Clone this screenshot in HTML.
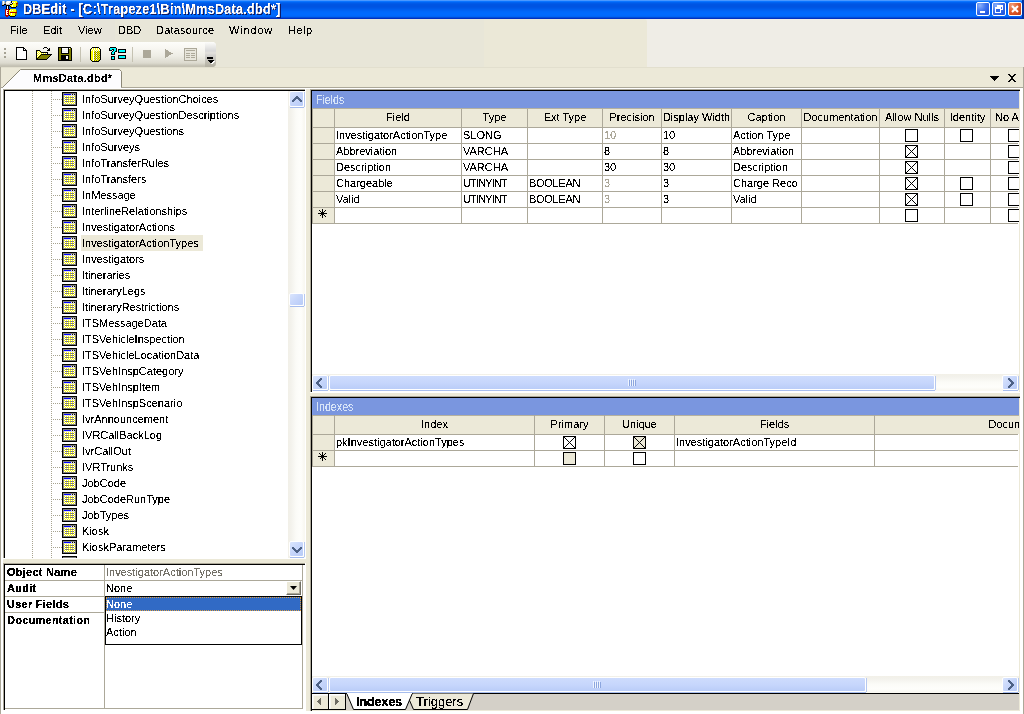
<!DOCTYPE html><html><head><meta charset="utf-8"><style>
*{box-sizing:border-box;margin:0;padding:0}
html,body{width:1024px;height:714px;overflow:hidden;background:#ECE9D8;font-family:"Liberation Sans",sans-serif;font-size:11px;color:#000;position:relative}
div,span{position:absolute}
.nw{white-space:nowrap}
.nw,.hc{filter:url(#aa)}
.bd{filter:url(#ab)!important}
</style></head><body>
<svg width="0" height="0" style="position:absolute"><filter id="aa" x="0" y="0" width="100%" height="100%"><feComponentTransfer><feFuncA type="discrete" tableValues="0 0 0 0 0 0 0 0 0 1 1 1 1 1 1 1 1 1 1 1"/></feComponentTransfer></filter><filter id="ab" x="0" y="0" width="100%" height="100%"><feComponentTransfer><feFuncA type="discrete" tableValues="0 0 0 1 1 1 1 1 1 1"/></feComponentTransfer></filter></svg>
<div style="left:0px;top:0px;width:1024px;height:19px;background:linear-gradient(#4A98FF 0px 1px,#0A74FF 1px 2px,#0062F2 2px 3px,#005AE8 3px 4px,#0055E3 4px 5px,#0054E2 5px 6px,#0054E2 6px 7px,#0056E5 7px 8px,#005AE9 8px 9px,#005FEF 9px 10px,#0063F4 10px 11px,#0067F9 11px 12px,#0069FC 12px 13px,#006AFE 13px 14px,#006AFE 14px 15px,#0069FC 15px 16px,#0064F6 16px 17px,#004ED8 17px 18px,#0030C0 18px 19px)"></div>
<div style="left:1022px;top:0px;width:2px;height:19px;background:#0030A0"></div>
<span class="nw" style="left:23px;top:1px;color:#fff;font-weight:bold;font-size:14px;line-height:17px;letter-spacing:0.3px;text-shadow:1px 1px 0 #0A1E6A;transform:scaleX(0.9);transform-origin:0 0">DBEdit - [C:\Trapeze1\Bin\MmsData.dbd*]</span>
<svg style="position:absolute;left:2px;top:1px" width="16" height="16" shape-rendering="crispEdges"><rect x="0" y="0" width="1" height="1" fill="#C8C4BC"/><rect x="1" y="0" width="1" height="1" fill="#fff"/><rect x="2" y="0" width="1" height="1" fill="#C8C4BC"/><rect x="4" y="0" width="1" height="1" fill="#C8C4BC"/><rect x="5" y="0" width="4" height="1" fill="#fff"/><rect x="9" y="0" width="1" height="1" fill="#000"/><rect x="10" y="0" width="5" height="1" fill="#FFFF00"/><rect x="0" y="1" width="1" height="1" fill="#C8C4BC"/><rect x="1" y="1" width="1" height="1" fill="#fff"/><rect x="2" y="1" width="1" height="1" fill="#C8C4BC"/><rect x="3" y="1" width="1" height="1" fill="#8A8680"/><rect x="4" y="1" width="4" height="1" fill="#fff"/><rect x="8" y="1" width="1" height="1" fill="#C8C4BC"/><rect x="9" y="1" width="1" height="1" fill="#000"/><rect x="10" y="1" width="1" height="1" fill="#fff"/><rect x="11" y="1" width="1" height="1" fill="#FFFF00"/><rect x="12" y="1" width="1" height="1" fill="#fff"/><rect x="13" y="1" width="2" height="1" fill="#FFFF00"/><rect x="15" y="1" width="1" height="1" fill="#808000"/><rect x="0" y="2" width="1" height="1" fill="#C8C4BC"/><rect x="1" y="2" width="1" height="1" fill="#fff"/><rect x="2" y="2" width="1" height="1" fill="#C8C4BC"/><rect x="3" y="2" width="1" height="1" fill="#8A8680"/><rect x="4" y="2" width="3" height="1" fill="#fff"/><rect x="7" y="2" width="2" height="1" fill="#C8C4BC"/><rect x="9" y="2" width="1" height="1" fill="#fff"/><rect x="10" y="2" width="1" height="1" fill="#000"/><rect x="11" y="2" width="3" height="1" fill="#FFFF00"/><rect x="14" y="2" width="2" height="1" fill="#B00000"/><rect x="0" y="3" width="2" height="1" fill="#C8C4BC"/><rect x="2" y="3" width="2" height="1" fill="#000"/><rect x="4" y="3" width="4" height="1" fill="#C8C4BC"/><rect x="8" y="3" width="2" height="1" fill="#000"/><rect x="10" y="3" width="4" height="1" fill="#FFFF00"/><rect x="14" y="3" width="2" height="1" fill="#808000"/><rect x="0" y="4" width="2" height="1" fill="#000"/><rect x="4" y="4" width="4" height="1" fill="#000"/><rect x="8" y="4" width="2" height="1" fill="#FFFF00"/><rect x="10" y="4" width="1" height="1" fill="#fff"/><rect x="11" y="4" width="3" height="1" fill="#FFFF00"/><rect x="14" y="4" width="2" height="1" fill="#808000"/><rect x="4" y="5" width="1" height="1" fill="#000"/><rect x="5" y="5" width="1" height="1" fill="#fff"/><rect x="6" y="5" width="1" height="1" fill="#000"/><rect x="8" y="5" width="1" height="1" fill="#000"/><rect x="9" y="5" width="1" height="1" fill="#FFFF00"/><rect x="10" y="5" width="1" height="1" fill="#fff"/><rect x="11" y="5" width="3" height="1" fill="#FFFF00"/><rect x="14" y="5" width="1" height="1" fill="#000"/><rect x="4" y="6" width="1" height="1" fill="#000"/><rect x="5" y="6" width="1" height="1" fill="#fff"/><rect x="6" y="6" width="1" height="1" fill="#000"/><rect x="9" y="6" width="5" height="1" fill="#000"/><rect x="4" y="7" width="1" height="1" fill="#000"/><rect x="5" y="7" width="1" height="1" fill="#fff"/><rect x="6" y="7" width="1" height="1" fill="#000"/><rect x="3" y="8" width="4" height="1" fill="#B00000"/><rect x="7" y="8" width="1" height="1" fill="#000"/><rect x="8" y="8" width="6" height="1" fill="#FFFF00"/><rect x="3" y="9" width="1" height="1" fill="#B00000"/><rect x="4" y="9" width="2" height="1" fill="#fff"/><rect x="6" y="9" width="1" height="1" fill="#B00000"/><rect x="7" y="9" width="1" height="1" fill="#FFFF00"/><rect x="8" y="9" width="1" height="1" fill="#fff"/><rect x="9" y="9" width="1" height="1" fill="#FFFF00"/><rect x="10" y="9" width="1" height="1" fill="#fff"/><rect x="11" y="9" width="3" height="1" fill="#FFFF00"/><rect x="14" y="9" width="1" height="1" fill="#808000"/><rect x="3" y="10" width="1" height="1" fill="#B00000"/><rect x="4" y="10" width="1" height="1" fill="#fff"/><rect x="5" y="10" width="2" height="1" fill="#B00000"/><rect x="7" y="10" width="7" height="1" fill="#FFFF00"/><rect x="14" y="10" width="1" height="1" fill="#808000"/><rect x="3" y="11" width="1" height="1" fill="#B00000"/><rect x="4" y="11" width="2" height="1" fill="#fff"/><rect x="6" y="11" width="1" height="1" fill="#B00000"/><rect x="7" y="11" width="1" height="1" fill="#FFFF00"/><rect x="8" y="11" width="7" height="1" fill="#B00000"/><rect x="3" y="12" width="1" height="1" fill="#B00000"/><rect x="4" y="12" width="1" height="1" fill="#fff"/><rect x="5" y="12" width="2" height="1" fill="#B00000"/><rect x="7" y="12" width="2" height="1" fill="#FFFF00"/><rect x="9" y="12" width="1" height="1" fill="#fff"/><rect x="10" y="12" width="3" height="1" fill="#FFFF00"/><rect x="13" y="12" width="2" height="1" fill="#808000"/><rect x="3" y="13" width="1" height="1" fill="#B00000"/><rect x="4" y="13" width="2" height="1" fill="#fff"/><rect x="6" y="13" width="1" height="1" fill="#B00000"/><rect x="7" y="13" width="2" height="1" fill="#FFFF00"/><rect x="9" y="13" width="1" height="1" fill="#fff"/><rect x="10" y="13" width="3" height="1" fill="#FFFF00"/><rect x="13" y="13" width="2" height="1" fill="#808000"/><rect x="3" y="14" width="4" height="1" fill="#B00000"/><rect x="7" y="14" width="1" height="1" fill="#000"/><rect x="8" y="14" width="5" height="1" fill="#FFFF00"/><rect x="13" y="14" width="1" height="1" fill="#000"/><rect x="4" y="15" width="2" height="1" fill="#B00000"/><rect x="8" y="15" width="5" height="1" fill="#000"/></svg>
<div style="left:976px;top:2px;width:14px;height:14px;border:1px solid #fff;border-radius:2px;background:radial-gradient(circle at 25% 20%,#8BB0FA 0,#3D72EE 45%,#2359E0 80%);overflow:hidden"><div style="left:3px;top:8px;width:5px;height:2px;background:#fff"></div></div>
<div style="left:992px;top:2px;width:14px;height:14px;border:1px solid #fff;border-radius:2px;background:radial-gradient(circle at 25% 20%,#8BB0FA 0,#3D72EE 45%,#2359E0 80%);overflow:hidden"><div style="left:4px;top:2px;width:6px;height:5px;border:1px solid #fff;border-top-width:2px"></div><div style="left:2px;top:4px;width:6px;height:6px;border:1px solid #fff;border-top-width:2px;background:#2C64E6"></div></div>
<div style="left:1008px;top:2px;width:14px;height:14px;border:1px solid #fff;border-radius:2px;background:radial-gradient(circle at 25% 20%,#F0A080 0,#E0602F 45%,#C8421A 85%);overflow:hidden"><svg width="12" height="12" style="position:absolute;left:0;top:0"><path d="M3 3L9 9M9 3L3 9" stroke="#fff" stroke-width="2"/></svg></div>
<div style="left:0px;top:19px;width:1024px;height:48px;background:#EFEDE6"></div>
<div style="left:0px;top:19px;width:484px;height:48px;background:#E8E6D8"></div>
<div style="left:484px;top:19px;width:163px;height:48px;background:#EBE8D7;border-top-right-radius:3px"></div>
<div style="left:0px;top:19px;width:115px;height:23px;background:#E6E4D9"></div>
<span class="nw" style="left:10px;top:24px;line-height:13px;letter-spacing:0px">File</span>
<span class="nw" style="left:43px;top:24px;line-height:13px;letter-spacing:0px">Edit</span>
<span class="nw" style="left:78px;top:24px;line-height:13px;letter-spacing:0px">View</span>
<span class="nw" style="left:118px;top:24px;line-height:13px;letter-spacing:0px">DBD</span>
<span class="nw" style="left:156px;top:24px;line-height:13px;letter-spacing:0.2px">Datasource</span>
<span class="nw" style="left:229px;top:24px;line-height:13px;letter-spacing:0.8px">Window</span>
<span class="nw" style="left:288px;top:24px;line-height:13px;letter-spacing:0.5px">Help</span>
<div style="left:0px;top:42px;width:216px;height:25px;background:linear-gradient(#FDFDFA 0px,#F8F7F2 6px,#EEEDE5 14px,#DCDACF 21px,#C3C0B2 24px);border-top-right-radius:4px;border-bottom-right-radius:4px"></div>
<div style="left:205px;top:42px;width:11px;height:25px;background:linear-gradient(#FDFDFB 0px,#F0F0EE 3px,#D8D8D8 9px,#E4E2DC 11px,#D4D3D0 13px,#C8C6BE 17px,#B5B2A4 24px);border-top-right-radius:4px;border-bottom-right-radius:4px"></div>
<div style="left:207px;top:57px;width:6px;height:2px;background:#000"></div>
<svg style="position:absolute;left:206px;top:60px" width="9" height="5" shape-rendering="crispEdges"><path d="M2 1H9L5.5 4.5Z" fill="#fff"/><path d="M1 0H8L4.5 3.5Z" fill="#000"/></svg>
<div style="left:4px;top:48px;width:2px;height:2px;background:#A5A294"></div>
<div style="left:4px;top:52px;width:2px;height:2px;background:#A5A294"></div>
<div style="left:4px;top:56px;width:2px;height:2px;background:#A5A294"></div>
<div style="left:80px;top:47px;width:1px;height:15px;background:#C5C2B2"></div>
<div style="left:132px;top:47px;width:1px;height:15px;background:#C5C2B2"></div>
<svg style="position:absolute;left:16px;top:47px" width="12" height="13" shape-rendering="crispEdges"><rect x="0" y="0" width="8" height="1" fill="#000"/><rect x="0" y="1" width="1" height="1" fill="#000"/><rect x="1" y="1" width="6" height="1" fill="#fff"/><rect x="7" y="1" width="2" height="1" fill="#000"/><rect x="0" y="2" width="1" height="1" fill="#000"/><rect x="1" y="2" width="6" height="1" fill="#fff"/><rect x="7" y="2" width="1" height="1" fill="#000"/><rect x="8" y="2" width="1" height="1" fill="#fff"/><rect x="9" y="2" width="1" height="1" fill="#000"/><rect x="0" y="3" width="1" height="1" fill="#000"/><rect x="1" y="3" width="6" height="1" fill="#fff"/><rect x="7" y="3" width="4" height="1" fill="#000"/><rect x="0" y="4" width="1" height="1" fill="#000"/><rect x="1" y="4" width="9" height="1" fill="#fff"/><rect x="10" y="4" width="1" height="1" fill="#000"/><rect x="0" y="5" width="1" height="1" fill="#000"/><rect x="1" y="5" width="9" height="1" fill="#fff"/><rect x="10" y="5" width="1" height="1" fill="#000"/><rect x="0" y="6" width="1" height="1" fill="#000"/><rect x="1" y="6" width="9" height="1" fill="#fff"/><rect x="10" y="6" width="1" height="1" fill="#000"/><rect x="0" y="7" width="1" height="1" fill="#000"/><rect x="1" y="7" width="9" height="1" fill="#fff"/><rect x="10" y="7" width="1" height="1" fill="#000"/><rect x="0" y="8" width="1" height="1" fill="#000"/><rect x="1" y="8" width="9" height="1" fill="#fff"/><rect x="10" y="8" width="1" height="1" fill="#000"/><rect x="0" y="9" width="1" height="1" fill="#000"/><rect x="1" y="9" width="9" height="1" fill="#fff"/><rect x="10" y="9" width="1" height="1" fill="#000"/><rect x="0" y="10" width="1" height="1" fill="#000"/><rect x="1" y="10" width="9" height="1" fill="#fff"/><rect x="10" y="10" width="1" height="1" fill="#000"/><rect x="0" y="11" width="1" height="1" fill="#000"/><rect x="1" y="11" width="9" height="1" fill="#fff"/><rect x="10" y="11" width="1" height="1" fill="#000"/><rect x="0" y="12" width="11" height="1" fill="#000"/></svg><svg style="position:absolute;left:36px;top:47px" width="16" height="13" shape-rendering="crispEdges"><rect x="8" y="0" width="3" height="1" fill="#000"/><rect x="7" y="1" width="1" height="1" fill="#000"/><rect x="11" y="1" width="1" height="1" fill="#000"/><rect x="13" y="1" width="1" height="1" fill="#000"/><rect x="12" y="2" width="2" height="1" fill="#000"/><rect x="0" y="3" width="4" height="1" fill="#000"/><rect x="11" y="3" width="3" height="1" fill="#000"/><rect x="0" y="4" width="1" height="1" fill="#000"/><rect x="1" y="4" width="1" height="1" fill="#FFFF00"/><rect x="2" y="4" width="1" height="1" fill="#fff"/><rect x="3" y="4" width="1" height="1" fill="#FFFF00"/><rect x="4" y="4" width="1" height="1" fill="#000"/><rect x="0" y="5" width="1" height="1" fill="#000"/><rect x="1" y="5" width="1" height="1" fill="#fff"/><rect x="2" y="5" width="1" height="1" fill="#FFFF00"/><rect x="3" y="5" width="1" height="1" fill="#fff"/><rect x="4" y="5" width="1" height="1" fill="#FFFF00"/><rect x="5" y="5" width="7" height="1" fill="#000"/><rect x="0" y="6" width="1" height="1" fill="#000"/><rect x="1" y="6" width="1" height="1" fill="#FFFF00"/><rect x="2" y="6" width="1" height="1" fill="#fff"/><rect x="3" y="6" width="1" height="1" fill="#FFFF00"/><rect x="4" y="6" width="1" height="1" fill="#fff"/><rect x="5" y="6" width="1" height="1" fill="#FFFF00"/><rect x="6" y="6" width="1" height="1" fill="#fff"/><rect x="7" y="6" width="1" height="1" fill="#FFFF00"/><rect x="8" y="6" width="1" height="1" fill="#fff"/><rect x="9" y="6" width="1" height="1" fill="#FFFF00"/><rect x="10" y="6" width="1" height="1" fill="#fff"/><rect x="11" y="6" width="1" height="1" fill="#000"/><rect x="0" y="7" width="1" height="1" fill="#000"/><rect x="1" y="7" width="1" height="1" fill="#fff"/><rect x="2" y="7" width="1" height="1" fill="#FFFF00"/><rect x="3" y="7" width="1" height="1" fill="#fff"/><rect x="4" y="7" width="1" height="1" fill="#FFFF00"/><rect x="5" y="7" width="11" height="1" fill="#000"/><rect x="0" y="8" width="1" height="1" fill="#000"/><rect x="1" y="8" width="1" height="1" fill="#FFFF00"/><rect x="2" y="8" width="1" height="1" fill="#fff"/><rect x="3" y="8" width="1" height="1" fill="#FFFF00"/><rect x="4" y="8" width="1" height="1" fill="#000"/><rect x="5" y="8" width="9" height="1" fill="#808000"/><rect x="14" y="8" width="1" height="1" fill="#000"/><rect x="0" y="9" width="1" height="1" fill="#000"/><rect x="1" y="9" width="1" height="1" fill="#fff"/><rect x="2" y="9" width="1" height="1" fill="#FFFF00"/><rect x="3" y="9" width="1" height="1" fill="#000"/><rect x="4" y="9" width="9" height="1" fill="#808000"/><rect x="13" y="9" width="1" height="1" fill="#000"/><rect x="0" y="10" width="1" height="1" fill="#000"/><rect x="1" y="10" width="1" height="1" fill="#FFFF00"/><rect x="2" y="10" width="1" height="1" fill="#000"/><rect x="3" y="10" width="9" height="1" fill="#808000"/><rect x="12" y="10" width="1" height="1" fill="#000"/><rect x="0" y="11" width="2" height="1" fill="#000"/><rect x="2" y="11" width="9" height="1" fill="#808000"/><rect x="11" y="11" width="1" height="1" fill="#000"/><rect x="0" y="12" width="11" height="1" fill="#000"/></svg><svg style="position:absolute;left:58px;top:47px" width="14" height="14" shape-rendering="crispEdges"><rect x="0" y="0" width="13" height="1" fill="#000"/><rect x="0" y="1" width="1" height="1" fill="#000"/><rect x="1" y="1" width="2" height="1" fill="#808000"/><rect x="3" y="1" width="1" height="1" fill="#000"/><rect x="4" y="1" width="6" height="1" fill="#fff"/><rect x="10" y="1" width="1" height="1" fill="#000"/><rect x="11" y="1" width="1" height="1" fill="#fff"/><rect x="12" y="1" width="1" height="1" fill="#808000"/><rect x="13" y="1" width="1" height="1" fill="#000"/><rect x="0" y="2" width="1" height="1" fill="#000"/><rect x="1" y="2" width="2" height="1" fill="#808000"/><rect x="3" y="2" width="1" height="1" fill="#000"/><rect x="4" y="2" width="6" height="1" fill="#F0F0F0"/><rect x="10" y="2" width="1" height="1" fill="#000"/><rect x="11" y="2" width="2" height="1" fill="#808000"/><rect x="13" y="2" width="1" height="1" fill="#000"/><rect x="0" y="3" width="1" height="1" fill="#000"/><rect x="1" y="3" width="2" height="1" fill="#808000"/><rect x="3" y="3" width="1" height="1" fill="#000"/><rect x="4" y="3" width="6" height="1" fill="#fff"/><rect x="10" y="3" width="1" height="1" fill="#000"/><rect x="11" y="3" width="2" height="1" fill="#808000"/><rect x="13" y="3" width="1" height="1" fill="#000"/><rect x="0" y="4" width="1" height="1" fill="#000"/><rect x="1" y="4" width="2" height="1" fill="#808000"/><rect x="3" y="4" width="1" height="1" fill="#000"/><rect x="4" y="4" width="6" height="1" fill="#F0F0F0"/><rect x="10" y="4" width="1" height="1" fill="#000"/><rect x="11" y="4" width="2" height="1" fill="#808000"/><rect x="13" y="4" width="1" height="1" fill="#000"/><rect x="0" y="5" width="1" height="1" fill="#000"/><rect x="1" y="5" width="2" height="1" fill="#808000"/><rect x="3" y="5" width="1" height="1" fill="#000"/><rect x="4" y="5" width="6" height="1" fill="#fff"/><rect x="10" y="5" width="1" height="1" fill="#000"/><rect x="11" y="5" width="2" height="1" fill="#808000"/><rect x="13" y="5" width="1" height="1" fill="#000"/><rect x="0" y="6" width="1" height="1" fill="#000"/><rect x="1" y="6" width="2" height="1" fill="#808000"/><rect x="3" y="6" width="8" height="1" fill="#000"/><rect x="11" y="6" width="2" height="1" fill="#808000"/><rect x="13" y="6" width="1" height="1" fill="#000"/><rect x="0" y="7" width="1" height="1" fill="#000"/><rect x="1" y="7" width="12" height="1" fill="#808000"/><rect x="13" y="7" width="1" height="1" fill="#000"/><rect x="0" y="8" width="1" height="1" fill="#000"/><rect x="1" y="8" width="2" height="1" fill="#808000"/><rect x="3" y="8" width="8" height="1" fill="#000"/><rect x="11" y="8" width="2" height="1" fill="#808000"/><rect x="13" y="8" width="1" height="1" fill="#000"/><rect x="0" y="9" width="1" height="1" fill="#000"/><rect x="1" y="9" width="2" height="1" fill="#808000"/><rect x="3" y="9" width="5" height="1" fill="#000"/><rect x="8" y="9" width="2" height="1" fill="#fff"/><rect x="10" y="9" width="1" height="1" fill="#000"/><rect x="11" y="9" width="2" height="1" fill="#808000"/><rect x="13" y="9" width="1" height="1" fill="#000"/><rect x="0" y="10" width="1" height="1" fill="#000"/><rect x="1" y="10" width="2" height="1" fill="#808000"/><rect x="3" y="10" width="5" height="1" fill="#000"/><rect x="8" y="10" width="2" height="1" fill="#fff"/><rect x="10" y="10" width="1" height="1" fill="#000"/><rect x="11" y="10" width="2" height="1" fill="#808000"/><rect x="13" y="10" width="1" height="1" fill="#000"/><rect x="0" y="11" width="1" height="1" fill="#000"/><rect x="1" y="11" width="2" height="1" fill="#808000"/><rect x="3" y="11" width="5" height="1" fill="#000"/><rect x="8" y="11" width="2" height="1" fill="#fff"/><rect x="10" y="11" width="1" height="1" fill="#000"/><rect x="11" y="11" width="2" height="1" fill="#808000"/><rect x="13" y="11" width="1" height="1" fill="#000"/><rect x="0" y="12" width="1" height="1" fill="#000"/><rect x="1" y="12" width="2" height="1" fill="#808000"/><rect x="3" y="12" width="8" height="1" fill="#000"/><rect x="11" y="12" width="2" height="1" fill="#808000"/><rect x="13" y="12" width="1" height="1" fill="#000"/><rect x="0" y="13" width="14" height="1" fill="#000"/></svg><svg style="position:absolute;left:90px;top:47px" width="11" height="15" shape-rendering="crispEdges"><rect x="2" y="0" width="7" height="1" fill="#000"/><rect x="1" y="1" width="1" height="1" fill="#000"/><rect x="2" y="1" width="1" height="1" fill="#fff"/><rect x="3" y="1" width="1" height="1" fill="#FFFF00"/><rect x="4" y="1" width="1" height="1" fill="#fff"/><rect x="5" y="1" width="1" height="1" fill="#FFFF00"/><rect x="6" y="1" width="1" height="1" fill="#fff"/><rect x="7" y="1" width="1" height="1" fill="#FFFF00"/><rect x="8" y="1" width="1" height="1" fill="#fff"/><rect x="9" y="1" width="1" height="1" fill="#000"/><rect x="0" y="2" width="1" height="1" fill="#000"/><rect x="1" y="2" width="1" height="1" fill="#FFFF00"/><rect x="2" y="2" width="1" height="1" fill="#fff"/><rect x="3" y="2" width="1" height="1" fill="#FFFF00"/><rect x="4" y="2" width="1" height="1" fill="#fff"/><rect x="5" y="2" width="1" height="1" fill="#FFFF00"/><rect x="6" y="2" width="1" height="1" fill="#fff"/><rect x="7" y="2" width="1" height="1" fill="#FFFF00"/><rect x="8" y="2" width="1" height="1" fill="#fff"/><rect x="9" y="2" width="1" height="1" fill="#FFFF00"/><rect x="10" y="2" width="1" height="1" fill="#000"/><rect x="0" y="3" width="1" height="1" fill="#000"/><rect x="1" y="3" width="1" height="1" fill="#fff"/><rect x="2" y="3" width="1" height="1" fill="#FFFF00"/><rect x="3" y="3" width="1" height="1" fill="#fff"/><rect x="4" y="3" width="1" height="1" fill="#FFFF00"/><rect x="5" y="3" width="1" height="1" fill="#fff"/><rect x="6" y="3" width="1" height="1" fill="#FFFF00"/><rect x="7" y="3" width="1" height="1" fill="#fff"/><rect x="8" y="3" width="1" height="1" fill="#FFFF00"/><rect x="9" y="3" width="1" height="1" fill="#fff"/><rect x="10" y="3" width="1" height="1" fill="#000"/><rect x="0" y="4" width="1" height="1" fill="#000"/><rect x="1" y="4" width="2" height="1" fill="#FFFF00"/><rect x="3" y="4" width="1" height="1" fill="#fff"/><rect x="4" y="4" width="1" height="1" fill="#FFFF00"/><rect x="5" y="4" width="1" height="1" fill="#808000"/><rect x="6" y="4" width="1" height="1" fill="#fff"/><rect x="7" y="4" width="1" height="1" fill="#808000"/><rect x="8" y="4" width="1" height="1" fill="#FFFF00"/><rect x="9" y="4" width="1" height="1" fill="#808000"/><rect x="10" y="4" width="1" height="1" fill="#000"/><rect x="0" y="5" width="1" height="1" fill="#000"/><rect x="1" y="5" width="2" height="1" fill="#FFFF00"/><rect x="3" y="5" width="1" height="1" fill="#fff"/><rect x="4" y="5" width="1" height="1" fill="#808000"/><rect x="5" y="5" width="1" height="1" fill="#FFFF00"/><rect x="6" y="5" width="1" height="1" fill="#808000"/><rect x="7" y="5" width="1" height="1" fill="#FFFF00"/><rect x="8" y="5" width="1" height="1" fill="#808000"/><rect x="9" y="5" width="1" height="1" fill="#FFFF00"/><rect x="10" y="5" width="1" height="1" fill="#000"/><rect x="0" y="6" width="1" height="1" fill="#000"/><rect x="1" y="6" width="2" height="1" fill="#FFFF00"/><rect x="3" y="6" width="1" height="1" fill="#fff"/><rect x="4" y="6" width="1" height="1" fill="#FFFF00"/><rect x="5" y="6" width="1" height="1" fill="#808000"/><rect x="6" y="6" width="1" height="1" fill="#fff"/><rect x="7" y="6" width="1" height="1" fill="#808000"/><rect x="8" y="6" width="1" height="1" fill="#FFFF00"/><rect x="9" y="6" width="1" height="1" fill="#808000"/><rect x="10" y="6" width="1" height="1" fill="#000"/><rect x="0" y="7" width="1" height="1" fill="#000"/><rect x="1" y="7" width="2" height="1" fill="#FFFF00"/><rect x="3" y="7" width="1" height="1" fill="#fff"/><rect x="4" y="7" width="1" height="1" fill="#808000"/><rect x="5" y="7" width="1" height="1" fill="#FFFF00"/><rect x="6" y="7" width="1" height="1" fill="#808000"/><rect x="7" y="7" width="1" height="1" fill="#FFFF00"/><rect x="8" y="7" width="1" height="1" fill="#808000"/><rect x="9" y="7" width="1" height="1" fill="#FFFF00"/><rect x="10" y="7" width="1" height="1" fill="#000"/><rect x="0" y="8" width="1" height="1" fill="#000"/><rect x="1" y="8" width="2" height="1" fill="#FFFF00"/><rect x="3" y="8" width="1" height="1" fill="#fff"/><rect x="4" y="8" width="1" height="1" fill="#FFFF00"/><rect x="5" y="8" width="1" height="1" fill="#808000"/><rect x="6" y="8" width="1" height="1" fill="#fff"/><rect x="7" y="8" width="1" height="1" fill="#808000"/><rect x="8" y="8" width="1" height="1" fill="#FFFF00"/><rect x="9" y="8" width="1" height="1" fill="#808000"/><rect x="10" y="8" width="1" height="1" fill="#000"/><rect x="0" y="9" width="1" height="1" fill="#000"/><rect x="1" y="9" width="2" height="1" fill="#FFFF00"/><rect x="3" y="9" width="1" height="1" fill="#fff"/><rect x="4" y="9" width="1" height="1" fill="#808000"/><rect x="5" y="9" width="1" height="1" fill="#FFFF00"/><rect x="6" y="9" width="1" height="1" fill="#808000"/><rect x="7" y="9" width="1" height="1" fill="#FFFF00"/><rect x="8" y="9" width="1" height="1" fill="#808000"/><rect x="9" y="9" width="1" height="1" fill="#FFFF00"/><rect x="10" y="9" width="1" height="1" fill="#000"/><rect x="0" y="10" width="1" height="1" fill="#000"/><rect x="1" y="10" width="2" height="1" fill="#FFFF00"/><rect x="3" y="10" width="1" height="1" fill="#fff"/><rect x="4" y="10" width="1" height="1" fill="#FFFF00"/><rect x="5" y="10" width="1" height="1" fill="#808000"/><rect x="6" y="10" width="1" height="1" fill="#fff"/><rect x="7" y="10" width="1" height="1" fill="#808000"/><rect x="8" y="10" width="1" height="1" fill="#FFFF00"/><rect x="9" y="10" width="1" height="1" fill="#808000"/><rect x="10" y="10" width="1" height="1" fill="#000"/><rect x="0" y="11" width="1" height="1" fill="#000"/><rect x="1" y="11" width="2" height="1" fill="#FFFF00"/><rect x="3" y="11" width="1" height="1" fill="#fff"/><rect x="4" y="11" width="1" height="1" fill="#808000"/><rect x="5" y="11" width="1" height="1" fill="#FFFF00"/><rect x="6" y="11" width="1" height="1" fill="#808000"/><rect x="7" y="11" width="1" height="1" fill="#FFFF00"/><rect x="8" y="11" width="1" height="1" fill="#808000"/><rect x="9" y="11" width="1" height="1" fill="#FFFF00"/><rect x="10" y="11" width="1" height="1" fill="#000"/><rect x="0" y="12" width="1" height="1" fill="#000"/><rect x="1" y="12" width="2" height="1" fill="#FFFF00"/><rect x="3" y="12" width="1" height="1" fill="#fff"/><rect x="4" y="12" width="1" height="1" fill="#FFFF00"/><rect x="5" y="12" width="1" height="1" fill="#808000"/><rect x="6" y="12" width="1" height="1" fill="#fff"/><rect x="7" y="12" width="1" height="1" fill="#808000"/><rect x="8" y="12" width="1" height="1" fill="#FFFF00"/><rect x="9" y="12" width="1" height="1" fill="#808000"/><rect x="10" y="12" width="1" height="1" fill="#000"/><rect x="1" y="13" width="1" height="1" fill="#000"/><rect x="2" y="13" width="1" height="1" fill="#FFFF00"/><rect x="3" y="13" width="1" height="1" fill="#fff"/><rect x="4" y="13" width="1" height="1" fill="#808000"/><rect x="5" y="13" width="1" height="1" fill="#FFFF00"/><rect x="6" y="13" width="1" height="1" fill="#808000"/><rect x="7" y="13" width="1" height="1" fill="#FFFF00"/><rect x="8" y="13" width="1" height="1" fill="#808000"/><rect x="9" y="13" width="1" height="1" fill="#000"/><rect x="2" y="14" width="7" height="1" fill="#000"/></svg><svg style="position:absolute;left:109px;top:47px" width="17" height="13" shape-rendering="crispEdges"><rect x="1" y="0" width="6" height="1" fill="#000"/><rect x="0" y="1" width="1" height="1" fill="#000"/><rect x="1" y="1" width="6" height="1" fill="#00FFFF"/><rect x="7" y="1" width="1" height="1" fill="#000"/><rect x="0" y="2" width="1" height="1" fill="#000"/><rect x="1" y="2" width="2" height="1" fill="#00FFFF"/><rect x="3" y="2" width="2" height="1" fill="#000"/><rect x="5" y="2" width="2" height="1" fill="#00FFFF"/><rect x="7" y="2" width="1" height="1" fill="#000"/><rect x="9" y="2" width="8" height="1" fill="#000"/><rect x="0" y="3" width="3" height="1" fill="#000"/><rect x="4" y="3" width="1" height="1" fill="#000"/><rect x="5" y="3" width="2" height="1" fill="#00FFFF"/><rect x="7" y="3" width="1" height="1" fill="#000"/><rect x="9" y="3" width="1" height="1" fill="#000"/><rect x="10" y="3" width="6" height="1" fill="#00FFFF"/><rect x="16" y="3" width="1" height="1" fill="#000"/><rect x="3" y="4" width="1" height="1" fill="#000"/><rect x="4" y="4" width="2" height="1" fill="#00FFFF"/><rect x="6" y="4" width="2" height="1" fill="#000"/><rect x="9" y="4" width="1" height="1" fill="#000"/><rect x="10" y="4" width="6" height="1" fill="#00FFFF"/><rect x="16" y="4" width="1" height="1" fill="#000"/><rect x="2" y="5" width="1" height="1" fill="#000"/><rect x="3" y="5" width="2" height="1" fill="#00FFFF"/><rect x="5" y="5" width="1" height="1" fill="#000"/><rect x="9" y="5" width="8" height="1" fill="#000"/><rect x="2" y="6" width="1" height="1" fill="#000"/><rect x="3" y="6" width="2" height="1" fill="#00FFFF"/><rect x="5" y="6" width="1" height="1" fill="#000"/><rect x="2" y="7" width="4" height="1" fill="#000"/><rect x="9" y="8" width="8" height="1" fill="#000"/><rect x="2" y="9" width="4" height="1" fill="#000"/><rect x="9" y="9" width="1" height="1" fill="#000"/><rect x="10" y="9" width="6" height="1" fill="#00FFFF"/><rect x="16" y="9" width="1" height="1" fill="#000"/><rect x="2" y="10" width="1" height="1" fill="#000"/><rect x="3" y="10" width="2" height="1" fill="#00FFFF"/><rect x="5" y="10" width="1" height="1" fill="#000"/><rect x="9" y="10" width="1" height="1" fill="#000"/><rect x="10" y="10" width="6" height="1" fill="#00FFFF"/><rect x="16" y="10" width="1" height="1" fill="#000"/><rect x="2" y="11" width="1" height="1" fill="#000"/><rect x="3" y="11" width="2" height="1" fill="#00FFFF"/><rect x="5" y="11" width="1" height="1" fill="#000"/><rect x="9" y="11" width="8" height="1" fill="#000"/><rect x="2" y="12" width="4" height="1" fill="#000"/></svg>
<div style="left:143px;top:50px;width:8px;height:8px;background:#ACA899"></div>
<svg style="position:absolute;left:165px;top:49px" width="9" height="10" shape-rendering="crispEdges"><path d="M0 0L8 4.5L0 9Z" fill="#ACA899"/></svg>
<svg style="position:absolute;left:184px;top:48px" width="13" height="13" shape-rendering="crispEdges">
 <rect x="0.5" y="0.5" width="12" height="12" fill="#E8E6DC" stroke="#ACA899"/>
 <rect x="2" y="2" width="9" height="1" fill="#ACA899"/>
 <rect x="2" y="5" width="4" height="1" fill="#ACA899"/><rect x="7" y="5" width="4" height="1" fill="#ACA899"/>
 <rect x="2" y="7" width="4" height="1" fill="#ACA899"/><rect x="7" y="7" width="4" height="1" fill="#ACA899"/>
 <rect x="2" y="9" width="4" height="1" fill="#ACA899"/><rect x="7" y="9" width="4" height="1" fill="#ACA899"/>
</svg>

<div style="left:0px;top:67px;width:1024px;height:21px;background:#ECE9D8"></div>
<div style="left:0px;top:67px;width:1024px;height:1px;background:#E2DFCE"></div>
<div style="left:0px;top:87px;width:1024px;height:1px;background:#ACA899"></div>
<div style="left:0px;top:88px;width:1024px;height:1px;background:#fff"></div>
<svg style="position:absolute;left:0;top:68px" width="130" height="20"><path d="M2.5 19.5L20.5 1.5H119.5L121.5 3.5V19.5" fill="#FCFCFE" stroke="#8C8877"/><path d="M3 19.5H121" stroke="#FCFCFE"/></svg>
<span class="nw" style="left:33px;top:72px;font-weight:bold;color:#000;line-height:13px;letter-spacing:0.25px">MmsData.dbd*</span>
<svg style="position:absolute;left:990px;top:76px" width="9" height="5" shape-rendering="crispEdges"><rect x="0" y="0" width="9" height="1" fill="#000"/><rect x="1" y="1" width="7" height="1" fill="#000"/><rect x="2" y="2" width="5" height="1" fill="#000"/><rect x="3" y="3" width="3" height="1" fill="#000"/><rect x="4" y="4" width="1" height="1" fill="#000"/></svg>
<svg style="position:absolute;left:1008px;top:74px" width="8" height="8" shape-rendering="crispEdges"><rect x="0" y="0" width="2" height="1" fill="#000"/><rect x="6" y="0" width="2" height="1" fill="#000"/><rect x="1" y="1" width="2" height="1" fill="#000"/><rect x="5" y="1" width="2" height="1" fill="#000"/><rect x="2" y="2" width="4" height="1" fill="#000"/><rect x="3" y="3" width="2" height="1" fill="#000"/><rect x="3" y="4" width="2" height="1" fill="#000"/><rect x="2" y="5" width="4" height="1" fill="#000"/><rect x="1" y="6" width="2" height="1" fill="#000"/><rect x="5" y="6" width="2" height="1" fill="#000"/><rect x="0" y="7" width="2" height="1" fill="#000"/><rect x="6" y="7" width="2" height="1" fill="#000"/></svg>
<div style="left:4px;top:90px;width:301px;height:468px;background:#fff;border-top:1px solid #000;border-left:1px solid #000"></div>
<div style="left:32px;top:91px;width:1px;height:467px;background:repeating-linear-gradient(#A8A490 0 1px,#fff 1px 2px)"></div>
<div style="left:51px;top:91px;width:1px;height:467px;background:repeating-linear-gradient(#A8A490 0 1px,#fff 1px 2px)"></div>
<svg width="0" height="0" style="position:absolute"><defs><pattern id="dy" width="2" height="2" patternUnits="userSpaceOnUse"><rect width="2" height="2" fill="#fff"/><rect width="1" height="1" fill="#FFFF00"/><rect x="1" y="1" width="1" height="1" fill="#FFFF00"/></pattern>
<symbol id="tic" viewBox="0 0 15 14">
<rect x="0" y="0" width="15" height="14" fill="#000"/>
<rect x="1" y="1" width="13" height="12" fill="#808080"/>
<rect x="2" y="2" width="11" height="2" fill="#E0E0E0"/>
<rect x="2" y="2" width="7" height="1" fill="#0000FF"/>
<rect x="10" y="2" width="1" height="1" fill="#000"/><rect x="12" y="2" width="1" height="1" fill="#000"/>
<rect x="2" y="4" width="11" height="8" fill="url(#dy)"/>
<rect x="3" y="5" width="4" height="1" fill="#808080"/><rect x="8" y="5" width="4" height="1" fill="#808080"/>
<rect x="3" y="7" width="4" height="1" fill="#808080"/><rect x="8" y="7" width="4" height="1" fill="#808080"/>
<rect x="3" y="9" width="4" height="1" fill="#808080"/><rect x="8" y="9" width="4" height="1" fill="#808080"/>
</symbol></defs></svg>
<div style="left:53px;top:99px;width:9px;height:1px;background:repeating-linear-gradient(90deg,#A8A490 0 1px,#fff 1px 2px)"></div><svg style="position:absolute;left:62px;top:92px;overflow:hidden" width="15" height="14" shape-rendering="crispEdges"><use href="#tic" width="15" height="14"/></svg><span class="nw" style="left:82px;top:93px;line-height:13px">InfoSurveyQuestionChoices</span><div style="left:53px;top:115px;width:9px;height:1px;background:repeating-linear-gradient(90deg,#A8A490 0 1px,#fff 1px 2px)"></div><svg style="position:absolute;left:62px;top:108px;overflow:hidden" width="15" height="14" shape-rendering="crispEdges"><use href="#tic" width="15" height="14"/></svg><span class="nw" style="left:82px;top:109px;line-height:13px">InfoSurveyQuestionDescriptions</span><div style="left:53px;top:131px;width:9px;height:1px;background:repeating-linear-gradient(90deg,#A8A490 0 1px,#fff 1px 2px)"></div><svg style="position:absolute;left:62px;top:124px;overflow:hidden" width="15" height="14" shape-rendering="crispEdges"><use href="#tic" width="15" height="14"/></svg><span class="nw" style="left:82px;top:125px;line-height:13px">InfoSurveyQuestions</span><div style="left:53px;top:147px;width:9px;height:1px;background:repeating-linear-gradient(90deg,#A8A490 0 1px,#fff 1px 2px)"></div><svg style="position:absolute;left:62px;top:140px;overflow:hidden" width="15" height="14" shape-rendering="crispEdges"><use href="#tic" width="15" height="14"/></svg><span class="nw" style="left:82px;top:141px;line-height:13px">InfoSurveys</span><div style="left:53px;top:163px;width:9px;height:1px;background:repeating-linear-gradient(90deg,#A8A490 0 1px,#fff 1px 2px)"></div><svg style="position:absolute;left:62px;top:156px;overflow:hidden" width="15" height="14" shape-rendering="crispEdges"><use href="#tic" width="15" height="14"/></svg><span class="nw" style="left:82px;top:157px;line-height:13px">InfoTransferRules</span><div style="left:53px;top:179px;width:9px;height:1px;background:repeating-linear-gradient(90deg,#A8A490 0 1px,#fff 1px 2px)"></div><svg style="position:absolute;left:62px;top:172px;overflow:hidden" width="15" height="14" shape-rendering="crispEdges"><use href="#tic" width="15" height="14"/></svg><span class="nw" style="left:82px;top:173px;line-height:13px">InfoTransfers</span><div style="left:53px;top:195px;width:9px;height:1px;background:repeating-linear-gradient(90deg,#A8A490 0 1px,#fff 1px 2px)"></div><svg style="position:absolute;left:62px;top:188px;overflow:hidden" width="15" height="14" shape-rendering="crispEdges"><use href="#tic" width="15" height="14"/></svg><span class="nw" style="left:82px;top:189px;line-height:13px">InMessage</span><div style="left:53px;top:211px;width:9px;height:1px;background:repeating-linear-gradient(90deg,#A8A490 0 1px,#fff 1px 2px)"></div><svg style="position:absolute;left:62px;top:204px;overflow:hidden" width="15" height="14" shape-rendering="crispEdges"><use href="#tic" width="15" height="14"/></svg><span class="nw" style="left:82px;top:205px;line-height:13px">InterlineRelationships</span><div style="left:53px;top:227px;width:9px;height:1px;background:repeating-linear-gradient(90deg,#A8A490 0 1px,#fff 1px 2px)"></div><svg style="position:absolute;left:62px;top:220px;overflow:hidden" width="15" height="14" shape-rendering="crispEdges"><use href="#tic" width="15" height="14"/></svg><span class="nw" style="left:82px;top:221px;line-height:13px">InvestigatorActions</span><div style="left:53px;top:243px;width:9px;height:1px;background:repeating-linear-gradient(90deg,#A8A490 0 1px,#fff 1px 2px)"></div><svg style="position:absolute;left:62px;top:236px;overflow:hidden" width="15" height="14" shape-rendering="crispEdges"><use href="#tic" width="15" height="14"/></svg><div style="left:81px;top:235px;width:122px;height:16px;background:#ECE9D8"></div><span class="nw" style="left:82px;top:237px;line-height:13px">InvestigatorActionTypes</span><div style="left:53px;top:259px;width:9px;height:1px;background:repeating-linear-gradient(90deg,#A8A490 0 1px,#fff 1px 2px)"></div><svg style="position:absolute;left:62px;top:252px;overflow:hidden" width="15" height="14" shape-rendering="crispEdges"><use href="#tic" width="15" height="14"/></svg><span class="nw" style="left:82px;top:253px;line-height:13px">Investigators</span><div style="left:53px;top:275px;width:9px;height:1px;background:repeating-linear-gradient(90deg,#A8A490 0 1px,#fff 1px 2px)"></div><svg style="position:absolute;left:62px;top:268px;overflow:hidden" width="15" height="14" shape-rendering="crispEdges"><use href="#tic" width="15" height="14"/></svg><span class="nw" style="left:82px;top:269px;line-height:13px">Itineraries</span><div style="left:53px;top:291px;width:9px;height:1px;background:repeating-linear-gradient(90deg,#A8A490 0 1px,#fff 1px 2px)"></div><svg style="position:absolute;left:62px;top:284px;overflow:hidden" width="15" height="14" shape-rendering="crispEdges"><use href="#tic" width="15" height="14"/></svg><span class="nw" style="left:82px;top:285px;line-height:13px">ItineraryLegs</span><div style="left:53px;top:307px;width:9px;height:1px;background:repeating-linear-gradient(90deg,#A8A490 0 1px,#fff 1px 2px)"></div><svg style="position:absolute;left:62px;top:300px;overflow:hidden" width="15" height="14" shape-rendering="crispEdges"><use href="#tic" width="15" height="14"/></svg><span class="nw" style="left:82px;top:301px;line-height:13px">ItineraryRestrictions</span><div style="left:53px;top:323px;width:9px;height:1px;background:repeating-linear-gradient(90deg,#A8A490 0 1px,#fff 1px 2px)"></div><svg style="position:absolute;left:62px;top:316px;overflow:hidden" width="15" height="14" shape-rendering="crispEdges"><use href="#tic" width="15" height="14"/></svg><span class="nw" style="left:82px;top:317px;line-height:13px">ITSMessageData</span><div style="left:53px;top:339px;width:9px;height:1px;background:repeating-linear-gradient(90deg,#A8A490 0 1px,#fff 1px 2px)"></div><svg style="position:absolute;left:62px;top:332px;overflow:hidden" width="15" height="14" shape-rendering="crispEdges"><use href="#tic" width="15" height="14"/></svg><span class="nw" style="left:82px;top:333px;line-height:13px">ITSVehicleInspection</span><div style="left:53px;top:355px;width:9px;height:1px;background:repeating-linear-gradient(90deg,#A8A490 0 1px,#fff 1px 2px)"></div><svg style="position:absolute;left:62px;top:348px;overflow:hidden" width="15" height="14" shape-rendering="crispEdges"><use href="#tic" width="15" height="14"/></svg><span class="nw" style="left:82px;top:349px;line-height:13px">ITSVehicleLocationData</span><div style="left:53px;top:371px;width:9px;height:1px;background:repeating-linear-gradient(90deg,#A8A490 0 1px,#fff 1px 2px)"></div><svg style="position:absolute;left:62px;top:364px;overflow:hidden" width="15" height="14" shape-rendering="crispEdges"><use href="#tic" width="15" height="14"/></svg><span class="nw" style="left:82px;top:365px;line-height:13px">ITSVehInspCategory</span><div style="left:53px;top:387px;width:9px;height:1px;background:repeating-linear-gradient(90deg,#A8A490 0 1px,#fff 1px 2px)"></div><svg style="position:absolute;left:62px;top:380px;overflow:hidden" width="15" height="14" shape-rendering="crispEdges"><use href="#tic" width="15" height="14"/></svg><span class="nw" style="left:82px;top:381px;line-height:13px">ITSVehInspItem</span><div style="left:53px;top:403px;width:9px;height:1px;background:repeating-linear-gradient(90deg,#A8A490 0 1px,#fff 1px 2px)"></div><svg style="position:absolute;left:62px;top:396px;overflow:hidden" width="15" height="14" shape-rendering="crispEdges"><use href="#tic" width="15" height="14"/></svg><span class="nw" style="left:82px;top:397px;line-height:13px">ITSVehInspScenario</span><div style="left:53px;top:419px;width:9px;height:1px;background:repeating-linear-gradient(90deg,#A8A490 0 1px,#fff 1px 2px)"></div><svg style="position:absolute;left:62px;top:412px;overflow:hidden" width="15" height="14" shape-rendering="crispEdges"><use href="#tic" width="15" height="14"/></svg><span class="nw" style="left:82px;top:413px;line-height:13px">IvrAnnouncement</span><div style="left:53px;top:435px;width:9px;height:1px;background:repeating-linear-gradient(90deg,#A8A490 0 1px,#fff 1px 2px)"></div><svg style="position:absolute;left:62px;top:428px;overflow:hidden" width="15" height="14" shape-rendering="crispEdges"><use href="#tic" width="15" height="14"/></svg><span class="nw" style="left:82px;top:429px;line-height:13px">IVRCallBackLog</span><div style="left:53px;top:451px;width:9px;height:1px;background:repeating-linear-gradient(90deg,#A8A490 0 1px,#fff 1px 2px)"></div><svg style="position:absolute;left:62px;top:444px;overflow:hidden" width="15" height="14" shape-rendering="crispEdges"><use href="#tic" width="15" height="14"/></svg><span class="nw" style="left:82px;top:445px;line-height:13px">IvrCallOut</span><div style="left:53px;top:467px;width:9px;height:1px;background:repeating-linear-gradient(90deg,#A8A490 0 1px,#fff 1px 2px)"></div><svg style="position:absolute;left:62px;top:460px;overflow:hidden" width="15" height="14" shape-rendering="crispEdges"><use href="#tic" width="15" height="14"/></svg><span class="nw" style="left:82px;top:461px;line-height:13px">IVRTrunks</span><div style="left:53px;top:483px;width:9px;height:1px;background:repeating-linear-gradient(90deg,#A8A490 0 1px,#fff 1px 2px)"></div><svg style="position:absolute;left:62px;top:476px;overflow:hidden" width="15" height="14" shape-rendering="crispEdges"><use href="#tic" width="15" height="14"/></svg><span class="nw" style="left:82px;top:477px;line-height:13px">JobCode</span><div style="left:53px;top:499px;width:9px;height:1px;background:repeating-linear-gradient(90deg,#A8A490 0 1px,#fff 1px 2px)"></div><svg style="position:absolute;left:62px;top:492px;overflow:hidden" width="15" height="14" shape-rendering="crispEdges"><use href="#tic" width="15" height="14"/></svg><span class="nw" style="left:82px;top:493px;line-height:13px">JobCodeRunType</span><div style="left:53px;top:515px;width:9px;height:1px;background:repeating-linear-gradient(90deg,#A8A490 0 1px,#fff 1px 2px)"></div><svg style="position:absolute;left:62px;top:508px;overflow:hidden" width="15" height="14" shape-rendering="crispEdges"><use href="#tic" width="15" height="14"/></svg><span class="nw" style="left:82px;top:509px;line-height:13px">JobTypes</span><div style="left:53px;top:531px;width:9px;height:1px;background:repeating-linear-gradient(90deg,#A8A490 0 1px,#fff 1px 2px)"></div><svg style="position:absolute;left:62px;top:524px;overflow:hidden" width="15" height="14" shape-rendering="crispEdges"><use href="#tic" width="15" height="14"/></svg><span class="nw" style="left:82px;top:525px;line-height:13px">Kiosk</span><div style="left:53px;top:547px;width:9px;height:1px;background:repeating-linear-gradient(90deg,#A8A490 0 1px,#fff 1px 2px)"></div><svg style="position:absolute;left:62px;top:540px;overflow:hidden" width="15" height="14" shape-rendering="crispEdges"><use href="#tic" width="15" height="14"/></svg><span class="nw" style="left:82px;top:541px;line-height:13px">KioskParameters</span><svg style="position:absolute;left:62px;top:556px;overflow:hidden" width="15" height="2" shape-rendering="crispEdges"><use href="#tic" width="15" height="14"/></svg>
<div style="left:288px;top:91px;width:17px;height:467px;background:linear-gradient(90deg,#F2F0E8 0,#F3F2EC 3px,#FBFBF7 8px,#FEFEFB 13px,#F9F8F2 16px)"></div>
<div style="left:290px;top:107px;width:14px;height:1px;background:#A7BDEE"></div>
<div style="left:304px;top:92px;width:1px;height:15px;background:#B6C8F0"></div>
<div style="left:289px;top:91px;width:15px;height:16px;border:1px solid #fff;border-radius:2px;background:linear-gradient(135deg,#DAE5FD 0,#C8D7FB 45%,#B8CBF7 100%)"><svg style="position:absolute;left:2px;top:4px" width="10" height="7" shape-rendering="crispEdges"><path d="M4 0h2v1h-2zM3 1h4v1h-4zM2 2h6v1h-6zM1 3h3v1h-3zM6 3h3v1h-3zM0 4h3v1h-3zM7 4h3v1h-3zM0 5h2v1h-2zM8 5h2v1h-2z" fill="#4D6185"/></svg></div>
<div style="left:290px;top:557px;width:14px;height:1px;background:#A7BDEE"></div>
<div style="left:304px;top:542px;width:1px;height:15px;background:#B6C8F0"></div>
<div style="left:289px;top:541px;width:15px;height:16px;border:1px solid #fff;border-radius:2px;background:linear-gradient(135deg,#DAE5FD 0,#C8D7FB 45%,#B8CBF7 100%)"><svg style="position:absolute;left:2px;top:4px" width="10" height="7" shape-rendering="crispEdges"><path d="M0 1h2v1h-2zM8 1h2v1h-2zM0 2h3v1h-3zM7 2h3v1h-3zM1 3h3v1h-3zM6 3h3v1h-3zM2 4h6v1h-6zM3 5h4v1h-4zM4 6h2v1h-2z" fill="#4D6185"/></svg></div>
<div style="left:290px;top:306px;width:14px;height:1px;background:#A7BDEE"></div>
<div style="left:304px;top:294px;width:1px;height:12px;background:#B6C8F0"></div>
<div style="left:289px;top:293px;width:15px;height:13px;border:1px solid #fff;border-radius:2px;background:linear-gradient(135deg,#DAE5FD 0,#C8D7FB 45%,#B8CBF7 100%)"></div>
<div style="left:305px;top:90px;width:1px;height:468px;background:#FFFFFF"></div>
<div style="left:3px;top:563px;width:303px;height:148px;background:#fff"></div>
<div style="left:302px;top:565px;width:1px;height:144px;background:#ACA899"></div>
<div style="left:5px;top:708px;width:298px;height:1px;background:#ACA899"></div>
<div style="left:104px;top:565px;width:1px;height:143px;background:#ACA899"></div>
<div style="left:5px;top:580px;width:297px;height:1px;background:#ACA899"></div>
<div style="left:5px;top:596px;width:297px;height:1px;background:#ACA899"></div>
<div style="left:5px;top:612px;width:99px;height:1px;background:#ACA899"></div>
<span class="nw bd" style="left:7px;top:566px;font-weight:bold;line-height:13px;letter-spacing:0.25px">Object Name</span>
<span class="nw bd" style="left:7px;top:582px;font-weight:bold;line-height:13px;letter-spacing:0.25px">Audit</span>
<span class="nw bd" style="left:7px;top:598px;font-weight:bold;line-height:13px;letter-spacing:0.25px">User Fields</span>
<span class="nw bd" style="left:7px;top:614px;font-weight:bold;line-height:13px;letter-spacing:0.25px">Documentation</span>
<span class="nw" style="left:106px;top:566px;color:#75736A;line-height:13px">InvestigatorActionTypes</span>
<span class="nw" style="left:106px;top:582px;line-height:13px">None</span>
<div style="left:286px;top:581px;width:15px;height:14px;background:#ECE9D8;border:1px solid;border-color:#fff #716F64 #716F64 #fff;box-shadow:inset -1px -1px 0 #ACA899"><svg style="position:absolute;left:3px;top:4px" width="8" height="5"><path d="M0 0H7L3.5 4Z" fill="#000"/></svg></div>
<div style="left:105px;top:596px;width:197px;height:49px;background:#fff;border:1px solid #000"></div>
<div style="left:106px;top:597px;width:195px;height:14px;background:#316AC5;outline:1px dotted #E0A040;outline-offset:-1px"></div>
<span class="nw" style="left:106px;top:598px;color:#fff;line-height:13px">None</span>
<span class="nw" style="left:106px;top:612px;line-height:13px">History</span>
<span class="nw" style="left:106px;top:626px;line-height:13px">Action</span>
<div style="left:311px;top:90px;width:708px;height:302px;background:#fff;border-top:1px solid #000;border-left:1px solid #000"></div>
<div style="left:312px;top:91px;width:707px;height:17px;background:#7A96DF"></div>
<div style="left:312px;top:108px;width:707px;height:1px;background:#B5B19F"></div>
<span class="nw" style="left:316px;top:93px;color:#D8E4F8;line-height:14px;font-size:12px;transform:scaleX(0.88);transform-origin:0 0">Fields</span>
<div style="left:312px;top:109px;width:707px;height:18px;background:#ECE9D8"></div>
<div style="left:312px;top:127px;width:22px;height:96px;background:#ECE9D8"></div>
<div style="left:312px;top:127px;width:707px;height:1px;background:#ACA899"></div>
<div style="left:312px;top:143px;width:706px;height:1px;background:#ACA899"></div>
<div style="left:312px;top:159px;width:706px;height:1px;background:#ACA899"></div>
<div style="left:312px;top:175px;width:706px;height:1px;background:#ACA899"></div>
<div style="left:312px;top:191px;width:706px;height:1px;background:#ACA899"></div>
<div style="left:312px;top:207px;width:706px;height:1px;background:#ACA899"></div>
<div style="left:312px;top:223px;width:706px;height:1px;background:#ACA899"></div>
<div style="left:334px;top:109px;width:1px;height:115px;background:#ACA899"></div>
<div style="left:461px;top:109px;width:1px;height:115px;background:#ACA899"></div>
<div style="left:527px;top:109px;width:1px;height:115px;background:#ACA899"></div>
<div style="left:602px;top:109px;width:1px;height:115px;background:#ACA899"></div>
<div style="left:661px;top:109px;width:1px;height:115px;background:#ACA899"></div>
<div style="left:731px;top:109px;width:1px;height:115px;background:#ACA899"></div>
<div style="left:801px;top:109px;width:1px;height:115px;background:#ACA899"></div>
<div style="left:879px;top:109px;width:1px;height:115px;background:#ACA899"></div>
<div style="left:944px;top:109px;width:1px;height:115px;background:#ACA899"></div>
<div style="left:990px;top:109px;width:1px;height:115px;background:#ACA899"></div>
<div class="nw" style="left:335px;top:111px;width:126px;text-align:center;line-height:13px">Field</div>
<div class="nw" style="left:462px;top:111px;width:65px;text-align:center;line-height:13px">Type</div>
<div class="nw" style="left:528px;top:111px;width:74px;text-align:center;line-height:13px">Ext Type</div>
<div class="nw" style="left:603px;top:111px;width:58px;text-align:center;line-height:13px">Precision</div>
<div class="nw" style="left:662px;top:111px;width:69px;text-align:center;line-height:13px">Display Width</div>
<div class="nw" style="left:732px;top:111px;width:69px;text-align:center;line-height:13px">Caption</div>
<div class="nw" style="left:802px;top:111px;width:77px;text-align:center;line-height:13px">Documentation</div>
<div class="nw" style="left:880px;top:111px;width:64px;text-align:center;line-height:13px">Allow Nulls</div>
<div class="nw" style="left:945px;top:111px;width:45px;text-align:center;line-height:13px">Identity</div>
<span class="nw" style="left:995px;top:111px;line-height:13px">No Allow</span>
<div style="left:1019px;top:90px;width:5px;height:302px;background:#ECE9D8"></div>
<span class="nw" style="left:336px;top:129px;color:#000;line-height:13px;letter-spacing:0px">InvestigatorActionType</span>
<span class="nw" style="left:463px;top:129px;color:#000;line-height:13px;letter-spacing:0px">SLONG</span>
<span class="nw" style="left:604px;top:129px;color:#ACA899;line-height:13px;letter-spacing:0px">10</span>
<span class="nw" style="left:663px;top:129px;color:#000;line-height:13px;letter-spacing:0px">10</span>
<span class="nw" style="left:733px;top:129px;color:#000;line-height:13px;letter-spacing:0px">Action Type</span>
<svg style="position:absolute;left:905px;top:129px" width="13" height="13" shape-rendering="crispEdges"><rect x="0.5" y="0.5" width="12" height="12" fill="#fff" stroke="#000"/></svg>
<svg style="position:absolute;left:960px;top:129px" width="13" height="13" shape-rendering="crispEdges"><rect x="0.5" y="0.5" width="12" height="12" fill="#fff" stroke="#000"/></svg>
<svg style="position:absolute;left:1008px;top:129px" width="13" height="13" shape-rendering="crispEdges"><rect x="0.5" y="0.5" width="12" height="12" fill="#fff" stroke="#000"/></svg>
<span class="nw" style="left:336px;top:145px;color:#000;line-height:13px;letter-spacing:0px">Abbreviation</span>
<span class="nw" style="left:463px;top:145px;color:#000;line-height:13px;letter-spacing:0px">VARCHA</span>
<span class="nw" style="left:604px;top:145px;color:#000;line-height:13px;letter-spacing:0px">8</span>
<span class="nw" style="left:663px;top:145px;color:#000;line-height:13px;letter-spacing:0px">8</span>
<span class="nw" style="left:733px;top:145px;color:#000;line-height:13px;letter-spacing:0px">Abbreviation</span>
<svg style="position:absolute;left:905px;top:145px" width="13" height="13" shape-rendering="crispEdges"><rect x="0.5" y="0.5" width="12" height="12" fill="#fff" stroke="#000"/><path d="M1 1h1v1h-1zM11 1h1v1h-1zM2 2h1v1h-1zM10 2h1v1h-1zM3 3h1v1h-1zM9 3h1v1h-1zM4 4h1v1h-1zM8 4h1v1h-1zM5 5h1v1h-1zM7 5h1v1h-1zM6 6h1v1h-1zM6 6h1v1h-1zM7 7h1v1h-1zM5 7h1v1h-1zM8 8h1v1h-1zM4 8h1v1h-1zM9 9h1v1h-1zM3 9h1v1h-1zM10 10h1v1h-1zM2 10h1v1h-1zM11 11h1v1h-1zM1 11h1v1h-1z" fill="#000"/></svg>
<svg style="position:absolute;left:1008px;top:145px" width="13" height="13" shape-rendering="crispEdges"><rect x="0.5" y="0.5" width="12" height="12" fill="#fff" stroke="#000"/></svg>
<span class="nw" style="left:336px;top:161px;color:#000;line-height:13px;letter-spacing:0px">Description</span>
<span class="nw" style="left:463px;top:161px;color:#000;line-height:13px;letter-spacing:0px">VARCHA</span>
<span class="nw" style="left:604px;top:161px;color:#000;line-height:13px;letter-spacing:0px">30</span>
<span class="nw" style="left:663px;top:161px;color:#000;line-height:13px;letter-spacing:0px">30</span>
<span class="nw" style="left:733px;top:161px;color:#000;line-height:13px;letter-spacing:0px">Description</span>
<svg style="position:absolute;left:905px;top:161px" width="13" height="13" shape-rendering="crispEdges"><rect x="0.5" y="0.5" width="12" height="12" fill="#fff" stroke="#000"/><path d="M1 1h1v1h-1zM11 1h1v1h-1zM2 2h1v1h-1zM10 2h1v1h-1zM3 3h1v1h-1zM9 3h1v1h-1zM4 4h1v1h-1zM8 4h1v1h-1zM5 5h1v1h-1zM7 5h1v1h-1zM6 6h1v1h-1zM6 6h1v1h-1zM7 7h1v1h-1zM5 7h1v1h-1zM8 8h1v1h-1zM4 8h1v1h-1zM9 9h1v1h-1zM3 9h1v1h-1zM10 10h1v1h-1zM2 10h1v1h-1zM11 11h1v1h-1zM1 11h1v1h-1z" fill="#000"/></svg>
<svg style="position:absolute;left:1008px;top:161px" width="13" height="13" shape-rendering="crispEdges"><rect x="0.5" y="0.5" width="12" height="12" fill="#fff" stroke="#000"/></svg>
<span class="nw" style="left:336px;top:177px;color:#000;line-height:13px;letter-spacing:0px">Chargeable</span>
<span class="nw" style="left:463px;top:177px;color:#000;line-height:13px;letter-spacing:-0.85px">UTINYINT</span>
<span class="nw" style="left:529px;top:177px;color:#000;line-height:13px;letter-spacing:-0.3px">BOOLEAN</span>
<span class="nw" style="left:604px;top:177px;color:#ACA899;line-height:13px;letter-spacing:0px">3</span>
<span class="nw" style="left:663px;top:177px;color:#000;line-height:13px;letter-spacing:0px">3</span>
<span class="nw" style="left:733px;top:177px;color:#000;line-height:13px;letter-spacing:0px">Charge Reco</span>
<svg style="position:absolute;left:905px;top:177px" width="13" height="13" shape-rendering="crispEdges"><rect x="0.5" y="0.5" width="12" height="12" fill="#fff" stroke="#000"/><path d="M1 1h1v1h-1zM11 1h1v1h-1zM2 2h1v1h-1zM10 2h1v1h-1zM3 3h1v1h-1zM9 3h1v1h-1zM4 4h1v1h-1zM8 4h1v1h-1zM5 5h1v1h-1zM7 5h1v1h-1zM6 6h1v1h-1zM6 6h1v1h-1zM7 7h1v1h-1zM5 7h1v1h-1zM8 8h1v1h-1zM4 8h1v1h-1zM9 9h1v1h-1zM3 9h1v1h-1zM10 10h1v1h-1zM2 10h1v1h-1zM11 11h1v1h-1zM1 11h1v1h-1z" fill="#000"/></svg>
<svg style="position:absolute;left:960px;top:177px" width="13" height="13" shape-rendering="crispEdges"><rect x="0.5" y="0.5" width="12" height="12" fill="#fff" stroke="#000"/></svg>
<svg style="position:absolute;left:1008px;top:177px" width="13" height="13" shape-rendering="crispEdges"><rect x="0.5" y="0.5" width="12" height="12" fill="#fff" stroke="#000"/></svg>
<span class="nw" style="left:336px;top:193px;color:#000;line-height:13px;letter-spacing:0px">Valid</span>
<span class="nw" style="left:463px;top:193px;color:#000;line-height:13px;letter-spacing:-0.85px">UTINYINT</span>
<span class="nw" style="left:529px;top:193px;color:#000;line-height:13px;letter-spacing:-0.3px">BOOLEAN</span>
<span class="nw" style="left:604px;top:193px;color:#ACA899;line-height:13px;letter-spacing:0px">3</span>
<span class="nw" style="left:663px;top:193px;color:#000;line-height:13px;letter-spacing:0px">3</span>
<span class="nw" style="left:733px;top:193px;color:#000;line-height:13px;letter-spacing:0px">Valid</span>
<svg style="position:absolute;left:905px;top:193px" width="13" height="13" shape-rendering="crispEdges"><rect x="0.5" y="0.5" width="12" height="12" fill="#fff" stroke="#000"/><path d="M1 1h1v1h-1zM11 1h1v1h-1zM2 2h1v1h-1zM10 2h1v1h-1zM3 3h1v1h-1zM9 3h1v1h-1zM4 4h1v1h-1zM8 4h1v1h-1zM5 5h1v1h-1zM7 5h1v1h-1zM6 6h1v1h-1zM6 6h1v1h-1zM7 7h1v1h-1zM5 7h1v1h-1zM8 8h1v1h-1zM4 8h1v1h-1zM9 9h1v1h-1zM3 9h1v1h-1zM10 10h1v1h-1zM2 10h1v1h-1zM11 11h1v1h-1zM1 11h1v1h-1z" fill="#000"/></svg>
<svg style="position:absolute;left:960px;top:193px" width="13" height="13" shape-rendering="crispEdges"><rect x="0.5" y="0.5" width="12" height="12" fill="#fff" stroke="#000"/></svg>
<svg style="position:absolute;left:1008px;top:193px" width="13" height="13" shape-rendering="crispEdges"><rect x="0.5" y="0.5" width="12" height="12" fill="#fff" stroke="#000"/></svg>
<span class="nw" style="left:317px;top:206px;font-size:13px;line-height:16px">&#x2733;</span>
<div style="left:312px;top:108px;width:1px;height:116px;background:#ACA899"></div>
<svg style="position:absolute;left:905px;top:209px" width="13" height="13" shape-rendering="crispEdges"><rect x="0.5" y="0.5" width="12" height="12" fill="#fff" stroke="#000"/></svg>
<svg style="position:absolute;left:1008px;top:209px" width="13" height="13" shape-rendering="crispEdges"><rect x="0.5" y="0.5" width="12" height="12" fill="#fff" stroke="#000"/></svg>
<div style="left:1019px;top:90px;width:1px;height:302px;background:#ECE9D8"></div>
<div style="left:312px;top:374px;width:707px;height:17px;background:linear-gradient(#F2F0E8 0,#F3F2EC 3px,#FBFBF7 8px,#FEFEFB 13px,#F9F8F2 16px)"></div>
<div style="left:313px;top:390px;width:15px;height:1px;background:#A7BDEE"></div>
<div style="left:328px;top:376px;width:1px;height:14px;background:#B6C8F0"></div>
<div style="left:312px;top:375px;width:16px;height:15px;border:1px solid #fff;border-radius:2px;background:linear-gradient(135deg,#DAE5FD 0,#C8D7FB 45%,#B8CBF7 100%)"><svg style="position:absolute;left:3px;top:2px" width="7" height="10" shape-rendering="crispEdges"><path d="M4 0h2v1h-2zM3 1h3v1h-3zM2 2h3v1h-3zM1 3h3v1h-3zM0 4h3v1h-3zM0 5h3v1h-3zM1 6h3v1h-3zM2 7h3v1h-3zM3 8h3v1h-3zM4 9h2v1h-2z" fill="#4D6185"/></svg></div>
<div style="left:1003px;top:390px;width:15px;height:1px;background:#A7BDEE"></div>
<div style="left:1018px;top:376px;width:1px;height:14px;background:#B6C8F0"></div>
<div style="left:1002px;top:375px;width:16px;height:15px;border:1px solid #fff;border-radius:2px;background:linear-gradient(135deg,#DAE5FD 0,#C8D7FB 45%,#B8CBF7 100%)"><svg style="position:absolute;left:4px;top:2px" width="7" height="10" shape-rendering="crispEdges"><path d="M1 0h2v1h-2zM1 1h3v1h-3zM2 2h3v1h-3zM3 3h3v1h-3zM4 4h3v1h-3zM4 5h3v1h-3zM3 6h3v1h-3zM2 7h3v1h-3zM1 8h3v1h-3zM1 9h2v1h-2z" fill="#4D6185"/></svg></div>
<div style="left:330px;top:390px;width:605px;height:1px;background:#A7BDEE"></div>
<div style="left:935px;top:376px;width:1px;height:14px;background:#B6C8F0"></div>
<div style="left:329px;top:375px;width:606px;height:15px;border:1px solid #fff;border-radius:2px;background:linear-gradient(#CEDCFD 0,#C6D6FC 7px,#BACDF8 13px)"><svg style="position:absolute;left:298px;top:3px" width="8" height="7" shape-rendering="crispEdges"><path d="M0.5 0V7M2.5 0V7M4.5 0V7M6.5 0V7" stroke="#EEF4FE"/><path d="M1.5 1V8M3.5 1V8M5.5 1V8M7.5 1V8" stroke="#8CA6DF"/></svg></div>
<div style="left:311px;top:397px;width:708px;height:313px;background:#fff;border-top:1px solid #000;border-left:1px solid #000"></div>
<div style="left:312px;top:398px;width:707px;height:17px;background:#7A96DF"></div>
<span class="nw" style="left:316px;top:400px;color:#D8E4F8;line-height:14px;font-size:12px;transform:scaleX(0.89);transform-origin:0 0">Indexes</span>
<div style="left:312px;top:415px;width:707px;height:1px;background:#B5B19F"></div>
<div style="left:312px;top:416px;width:707px;height:18px;background:#ECE9D8"></div>
<div style="left:312px;top:434px;width:22px;height:32px;background:#ECE9D8"></div>
<div style="left:312px;top:434px;width:706px;height:1px;background:#ACA899"></div>
<div style="left:312px;top:450px;width:706px;height:1px;background:#ACA899"></div>
<div style="left:312px;top:466px;width:706px;height:1px;background:#ACA899"></div>
<div style="left:334px;top:415px;width:1px;height:52px;background:#ACA899"></div>
<div style="left:534px;top:415px;width:1px;height:52px;background:#ACA899"></div>
<div style="left:604px;top:415px;width:1px;height:52px;background:#ACA899"></div>
<div style="left:674px;top:415px;width:1px;height:52px;background:#ACA899"></div>
<div style="left:874px;top:415px;width:1px;height:52px;background:#ACA899"></div>
<div class="nw" style="left:335px;top:418px;width:199px;text-align:center;line-height:13px">Index</div>
<div class="nw" style="left:535px;top:418px;width:69px;text-align:center;line-height:13px">Primary</div>
<div class="nw" style="left:605px;top:418px;width:69px;text-align:center;line-height:13px">Unique</div>
<div class="nw" style="left:675px;top:418px;width:199px;text-align:center;line-height:13px">Fields</div>
<div class="nw" style="left:875px;top:418px;width:301px;text-align:center;line-height:13px">Documentation</div>
<span class="nw" style="left:336px;top:436px;line-height:13px">pkInvestigatorActionTypes</span>
<span class="nw" style="left:676px;top:436px;line-height:13px">InvestigatorActionTypeId</span>
<svg style="position:absolute;left:563px;top:436px" width="13" height="13" shape-rendering="crispEdges"><rect x="0.5" y="0.5" width="12" height="12" fill="#fff" stroke="#000"/><path d="M1 1h1v1h-1zM11 1h1v1h-1zM2 2h1v1h-1zM10 2h1v1h-1zM3 3h1v1h-1zM9 3h1v1h-1zM4 4h1v1h-1zM8 4h1v1h-1zM5 5h1v1h-1zM7 5h1v1h-1zM6 6h1v1h-1zM6 6h1v1h-1zM7 7h1v1h-1zM5 7h1v1h-1zM8 8h1v1h-1zM4 8h1v1h-1zM9 9h1v1h-1zM3 9h1v1h-1zM10 10h1v1h-1zM2 10h1v1h-1zM11 11h1v1h-1zM1 11h1v1h-1z" fill="#000"/></svg>
<svg style="position:absolute;left:633px;top:436px" width="13" height="13" shape-rendering="crispEdges"><rect x="0.5" y="0.5" width="12" height="12" fill="#ECE9D8" stroke="#000"/><path d="M1 1h1v1h-1zM11 1h1v1h-1zM2 2h1v1h-1zM10 2h1v1h-1zM3 3h1v1h-1zM9 3h1v1h-1zM4 4h1v1h-1zM8 4h1v1h-1zM5 5h1v1h-1zM7 5h1v1h-1zM6 6h1v1h-1zM6 6h1v1h-1zM7 7h1v1h-1zM5 7h1v1h-1zM8 8h1v1h-1zM4 8h1v1h-1zM9 9h1v1h-1zM3 9h1v1h-1zM10 10h1v1h-1zM2 10h1v1h-1zM11 11h1v1h-1zM1 11h1v1h-1z" fill="#000"/></svg>
<span class="nw" style="left:317px;top:449px;font-size:13px;line-height:16px">&#x2733;</span>
<div style="left:312px;top:415px;width:1px;height:52px;background:#ACA899"></div>
<svg style="position:absolute;left:563px;top:452px" width="13" height="13" shape-rendering="crispEdges"><rect x="0.5" y="0.5" width="12" height="12" fill="#ECE9D8" stroke="#000"/></svg>
<svg style="position:absolute;left:633px;top:452px" width="13" height="13" shape-rendering="crispEdges"><rect x="0.5" y="0.5" width="12" height="12" fill="#fff" stroke="#000"/></svg>
<div style="left:1019px;top:397px;width:5px;height:317px;background:#ECE9D8"></div>
<div style="left:312px;top:676px;width:707px;height:17px;background:linear-gradient(#F2F0E8 0,#F3F2EC 3px,#FBFBF7 8px,#FEFEFB 13px,#F9F8F2 16px)"></div>
<div style="left:313px;top:692px;width:15px;height:1px;background:#A7BDEE"></div>
<div style="left:328px;top:678px;width:1px;height:14px;background:#B6C8F0"></div>
<div style="left:312px;top:677px;width:16px;height:15px;border:1px solid #fff;border-radius:2px;background:linear-gradient(135deg,#DAE5FD 0,#C8D7FB 45%,#B8CBF7 100%)"><svg style="position:absolute;left:3px;top:2px" width="7" height="10" shape-rendering="crispEdges"><path d="M4 0h2v1h-2zM3 1h3v1h-3zM2 2h3v1h-3zM1 3h3v1h-3zM0 4h3v1h-3zM0 5h3v1h-3zM1 6h3v1h-3zM2 7h3v1h-3zM3 8h3v1h-3zM4 9h2v1h-2z" fill="#4D6185"/></svg></div>
<div style="left:1003px;top:692px;width:15px;height:1px;background:#A7BDEE"></div>
<div style="left:1018px;top:678px;width:1px;height:14px;background:#B6C8F0"></div>
<div style="left:1002px;top:677px;width:16px;height:15px;border:1px solid #fff;border-radius:2px;background:linear-gradient(135deg,#DAE5FD 0,#C8D7FB 45%,#B8CBF7 100%)"><svg style="position:absolute;left:4px;top:2px" width="7" height="10" shape-rendering="crispEdges"><path d="M1 0h2v1h-2zM1 1h3v1h-3zM2 2h3v1h-3zM3 3h3v1h-3zM4 4h3v1h-3zM4 5h3v1h-3zM3 6h3v1h-3zM2 7h3v1h-3zM1 8h3v1h-3zM1 9h2v1h-2z" fill="#4D6185"/></svg></div>
<div style="left:330px;top:692px;width:536px;height:1px;background:#A7BDEE"></div>
<div style="left:866px;top:678px;width:1px;height:14px;background:#B6C8F0"></div>
<div style="left:329px;top:677px;width:537px;height:15px;border:1px solid #fff;border-radius:2px;background:linear-gradient(#CEDCFD 0,#C6D6FC 7px,#BACDF8 13px)"><svg style="position:absolute;left:263px;top:3px" width="8" height="7" shape-rendering="crispEdges"><path d="M0.5 0V7M2.5 0V7M4.5 0V7M6.5 0V7" stroke="#EEF4FE"/><path d="M1.5 1V8M3.5 1V8M5.5 1V8M7.5 1V8" stroke="#8CA6DF"/></svg></div>
<div style="left:312px;top:693px;width:707px;height:17px;background:#D4D0C8"></div>
<div style="left:311px;top:693px;width:708px;height:1px;background:#000"></div>
<div style="left:311px;top:709px;width:35px;height:1px;background:#000"></div>
<div style="left:311px;top:693px;width:35px;height:17px;background:#000"></div>
<div style="left:312px;top:694px;width:16px;height:15px;background:#ECE9D8;box-shadow:inset 1px 1px 0 #fff,inset 2px 2px 0 #F6F5EE"><svg style="position:absolute;left:5px;top:4px" width="5" height="7" shape-rendering="crispEdges"><path d="M4 0V7L0 3.5Z" fill="#6D6B62"/></svg></div>
<div style="left:329px;top:694px;width:16px;height:15px;background:#ECE9D8;box-shadow:inset 1px 1px 0 #fff,inset 2px 2px 0 #F6F5EE"><svg style="position:absolute;left:6px;top:4px" width="5" height="7" shape-rendering="crispEdges"><path d="M0 0V7L4 3.5Z" fill="#6D6B62"/></svg></div>
<svg style="position:absolute;left:340px;top:693px" width="150" height="18"><path d="M66.5 0.5L73.5 16.5H127.5L133.5 0.5" fill="#ECE9D8" stroke="#000"/><path d="M6.5 0L13.5 16.5H65.5L72.5 0" fill="#fff" stroke="#000"/><path d="M7 0.5H72" stroke="#fff"/></svg>
<span class="nw bd" style="left:356px;top:695px;font-weight:bold;font-size:13px;line-height:14px;letter-spacing:-0.35px">Indexes</span>
<span class="nw" style="left:416px;top:695px;font-size:13px;line-height:14px">Triggers</span>
<div style="left:0px;top:67px;width:1px;height:647px;background:#ACA899"></div>
<div style="left:1px;top:88px;width:2px;height:626px;background:#fff"></div>
<div style="left:1023px;top:67px;width:1px;height:647px;background:#ACA899"></div>
<div style="left:1020px;top:88px;width:3px;height:626px;background:#fff"></div>
<div style="left:1px;top:711px;width:1022px;height:3px;background:#fff"></div>
<div style="left:3px;top:89px;width:303px;height:1px;background:#ACA899"></div>
<div style="left:3px;top:89px;width:1px;height:470px;background:#ACA899"></div>
<div style="left:305px;top:89px;width:1px;height:470px;background:#fff"></div>
<div style="left:3px;top:558px;width:303px;height:1px;background:#fff"></div>
<div style="left:4px;top:90px;width:301px;height:1px;background:#000"></div>
<div style="left:4px;top:90px;width:1px;height:468px;background:#000"></div>
<div style="left:3px;top:563px;width:303px;height:1px;background:#ACA899"></div>
<div style="left:3px;top:563px;width:1px;height:148px;background:#ACA899"></div>
<div style="left:305px;top:563px;width:1px;height:148px;background:#fff"></div>
<div style="left:3px;top:710px;width:303px;height:1px;background:#fff"></div>
<div style="left:4px;top:564px;width:301px;height:1px;background:#000"></div>
<div style="left:4px;top:564px;width:1px;height:146px;background:#000"></div>
<div style="left:310px;top:89px;width:711px;height:1px;background:#ACA899"></div>
<div style="left:310px;top:89px;width:1px;height:304px;background:#ACA899"></div>
<div style="left:1020px;top:89px;width:1px;height:304px;background:#fff"></div>
<div style="left:310px;top:392px;width:711px;height:1px;background:#fff"></div>
<div style="left:311px;top:90px;width:709px;height:1px;background:#000"></div>
<div style="left:311px;top:90px;width:1px;height:302px;background:#000"></div>
<div style="left:310px;top:396px;width:711px;height:1px;background:#ACA899"></div>
<div style="left:310px;top:396px;width:1px;height:316px;background:#ACA899"></div>
<div style="left:1020px;top:396px;width:1px;height:316px;background:#fff"></div>
<div style="left:310px;top:711px;width:711px;height:1px;background:#fff"></div>
<div style="left:311px;top:397px;width:709px;height:1px;background:#000"></div>
<div style="left:311px;top:397px;width:1px;height:314px;background:#000"></div>
</body></html>
